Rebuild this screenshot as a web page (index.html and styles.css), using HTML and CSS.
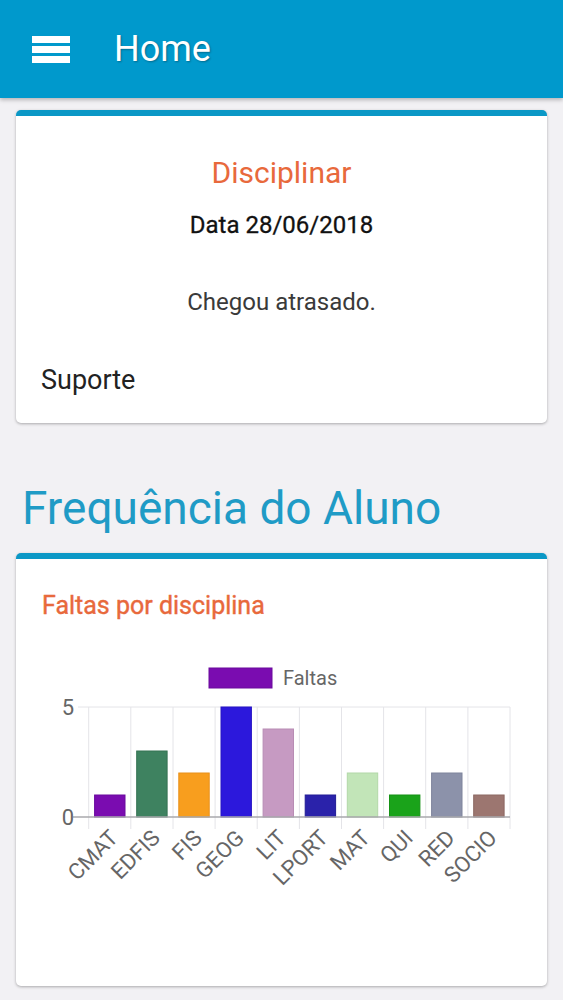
FILE: index.html
```html
<!DOCTYPE html>
<html lang="pt-BR">
<head>
  <meta charset="UTF-8">
  <meta name="viewport" content="width=device-width, initial-scale=1.0">
  <title>Home</title>
  <link rel="stylesheet" href="styles.css">
</head>
<body>
  <header class="topbar">
    <svg class="menu-icon" width="38" height="27" viewBox="0 0 38 27">
      <rect x="0" y="0" width="38" height="7" fill="#fff"/>
      <rect x="0" y="10" width="38" height="7" fill="#fff"/>
      <rect x="0" y="20" width="38" height="7" fill="#fff"/>
    </svg>
    <h1 class="topbar-title">Home</h1>
  </header>

  <main class="content">
    <section class="card notice">
      <h2 class="notice-type">Disciplinar</h2>
      <p class="notice-date">Data 28/06/2018</p>
      <p class="notice-text">Chegou atrasado.</p>
      <p class="notice-author">Suporte</p>
    </section>

    <h2 class="section-title">Frequência do Aluno</h2>

    <section class="card chart-card">
      <h3 class="chart-title">Faltas por disciplina</h3>
      <svg class="chart" width="531" height="300" viewBox="16 650 531 300">
        <!-- legend -->
        <rect x="209" y="668" width="63" height="20" fill="#7a0cb0" stroke="#6a0a9c" stroke-width="1"/>
        <text class="legend-label" x="283" y="678">Faltas</text>

        <!-- grid -->
        <g stroke="#e4e4e8" stroke-width="1">
          <line x1="78" y1="707" x2="510" y2="707"/>
          <line x1="88.7" y1="707" x2="88.7" y2="829"/>
          <line x1="130.8" y1="707" x2="130.8" y2="829"/>
          <line x1="173" y1="707" x2="173" y2="829"/>
          <line x1="215.1" y1="707" x2="215.1" y2="829"/>
          <line x1="257.2" y1="707" x2="257.2" y2="829"/>
          <line x1="299.4" y1="707" x2="299.4" y2="829"/>
          <line x1="341.5" y1="707" x2="341.5" y2="829"/>
          <line x1="383.6" y1="707" x2="383.6" y2="829"/>
          <line x1="425.7" y1="707" x2="425.7" y2="829"/>
          <line x1="467.9" y1="707" x2="467.9" y2="829"/>
          <line x1="510" y1="707" x2="510" y2="829"/>
        </g>

        <!-- bars -->
        <g stroke-width="1">
          <rect x="94.6" y="795" width="30.4" height="22" fill="#7a0cb0" stroke="#6b0a9e"/>
          <rect x="136.7" y="751" width="30.4" height="66" fill="#3e8260" stroke="#357253"/>
          <rect x="178.8" y="773" width="30.4" height="44" fill="#f89e1e" stroke="#e8901a"/>
          <rect x="221" y="707" width="30.4" height="110" fill="#2c18dc" stroke="#2614c4"/>
          <rect x="263.1" y="729" width="30.4" height="88" fill="#c69ac2" stroke="#b88cb4"/>
          <rect x="305.2" y="795" width="30.4" height="22" fill="#2a22aa" stroke="#221c96"/>
          <rect x="347.3" y="773" width="30.4" height="44" fill="#c2e5b8" stroke="#b2d8a8"/>
          <rect x="389.5" y="795" width="30.4" height="22" fill="#1aa31a" stroke="#159215"/>
          <rect x="431.6" y="773" width="30.4" height="44" fill="#8c92aa" stroke="#7e849c"/>
          <rect x="473.7" y="795" width="30.4" height="22" fill="#9c7670" stroke="#8c6862"/>
        </g>

        <line x1="73" y1="817" x2="510" y2="817" stroke="#a8a8ac" stroke-width="1.5"/>

        <!-- y axis -->
        <text class="axis-label y-label" x="74" y="707">5</text>
        <text class="axis-label y-label" x="74" y="817">0</text>

        <!-- x axis -->
        <text class="axis-label x-label" transform="translate(114 834) rotate(-45)">CMAT</text>
        <text class="axis-label x-label" transform="translate(156 834) rotate(-45)">EDFIS</text>
        <text class="axis-label x-label" transform="translate(198 834) rotate(-45)">FIS</text>
        <text class="axis-label x-label" transform="translate(240 834) rotate(-45)">GEOG</text>
        <text class="axis-label x-label" transform="translate(282 834) rotate(-45)">LIT</text>
        <text class="axis-label x-label" transform="translate(324 834) rotate(-45)">LPORT</text>
        <text class="axis-label x-label" transform="translate(366 834) rotate(-45)">MAT</text>
        <text class="axis-label x-label" transform="translate(409 834) rotate(-45)">QUI</text>
        <text class="axis-label x-label" transform="translate(451 834) rotate(-45)">RED</text>
        <text class="axis-label x-label" transform="translate(493 834) rotate(-45)">SOCIO</text>
      </svg>
    </section>
  </main>
</body>
</html>
```

FILE: styles.css
```css
body {
  margin: 0;
  background-color: #f2f1f4;
  font-family: Roboto, "Noto Sans", sans-serif;
  color: #333;
}
.topbar {
  height: 98px;
  background-color: #0099cc;
  box-shadow: 0 2px 4px rgba(0, 0, 0, 0.25);
  display: flex;
  align-items: center;
  padding-left: 32px;
  gap: 44px;
  box-sizing: border-box;
}
.menu-icon {
  display: block;
  margin-top: 1px;
}
.topbar-title {
  margin: 0;
  color: white;
  font-size: 36px;
  font-weight: 400;
  line-height: 40px;
  text-shadow: 1px 1px 2px rgba(0, 0, 0, 0.3);
}
.content {
  padding: 12px 16px 14px;
}
.card {
  background-color: white;
  border-top: 6px solid #0b98c6;
  border-radius: 5px;
  box-shadow: 0 1px 3px rgba(0, 0, 0, 0.3);
}
.notice {
  padding: 39px 24px 27px;
  text-align: center;
}
.notice-type {
  margin: 0;
  color: #e8693c;
  font-size: 30px;
  font-weight: 400;
  line-height: 36px;
}
.notice-date {
  margin: 19px 0 0;
  color: #111;
  font-size: 24px;
  font-weight: 400;
  line-height: 30px;
  -webkit-text-stroke: 0.3px #111;
}
.notice-text {
  margin: 47px 0 0;
  color: #3a3a3a;
  font-size: 24px;
  line-height: 30px;
}
.notice-author {
  margin: 47px 0 0 1px;
  color: #222;
  font-size: 27px;
  line-height: 32px;
  text-align: left;
}
.section-title {
  margin: 59px 0 19px 6px;
  color: #1f9bc6;
  font-size: 46px;
  font-weight: 400;
  line-height: 52px;
}
.chart-card {
  padding: 32px 0 36px;
}
.chart-title {
  margin: 0 0 29px 26px;
  color: #e8693c;
  font-size: 25px;
  font-weight: 400;
  line-height: 30px;
  -webkit-text-stroke: 0.4px #e8693c;
}
.chart {
  display: block;
}
.chart text {
  font-family: Roboto, "Noto Sans", sans-serif;
  fill: #666;
}
.legend-label {
  font-size: 20px;
  dominant-baseline: central;
}
.axis-label {
  font-size: 22px;
}
.y-label {
  text-anchor: end;
  dominant-baseline: central;
}
.x-label {
  text-anchor: end;
  dominant-baseline: central;
}
```
